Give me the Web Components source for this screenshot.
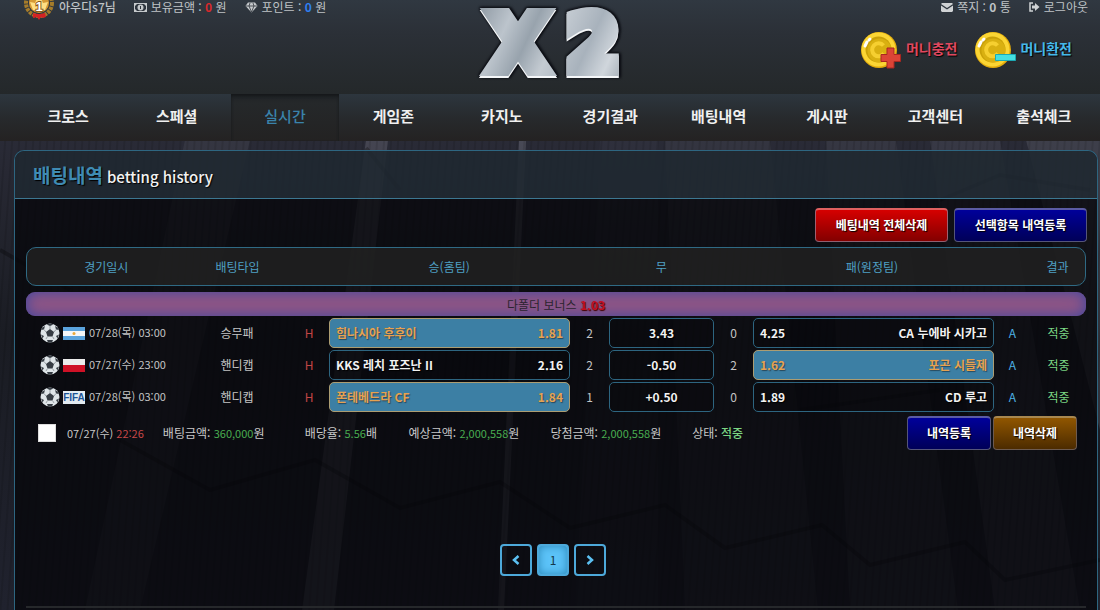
<!DOCTYPE html>
<html lang="ko">
<head>
<meta charset="utf-8">
<title>배팅내역</title>
<style>
  html, body { margin: 0; }
  body {
    background: #0b0c10;
    color: #ccc;
    font: 12px/16px "Noto Sans CJK KR", sans-serif;
  }
</style>
</head>
<body>
<bet-page>
  <top-bar slot="top"></top-bar>
  <main-nav slot="nav" items="크로스,스페셜,실시간,게임존,카지노,경기결과,배팅내역,게시판,고객센터,출석체크" current="실시간"></main-nav>
  <history-panel>
    <span slot="title">배팅내역</span>
    <span slot="subtitle">betting history</span>
    <glossy-button slot="actions" tone="red" size="wide">베팅내역 전체삭제</glossy-button>
    <glossy-button slot="actions" tone="blue" size="wide">선택항목 내역등록</glossy-button>
    <bet-table></bet-table>
    <bet-summary></bet-summary>
    <page-switch></page-switch>
  </history-panel>
</bet-page>

<script>
const define = (name, html, setup) => {
  const template = document.createElement('template');
  template.innerHTML = '<style>*{box-sizing:border-box}</style>' + html;
  customElements.define(name, class extends HTMLElement {
    constructor() {
      super();
      this.attachShadow({ mode: 'open' }).append(template.content.cloneNode(true));
    }
    connectedCallback() {
      if (setup && !this.ready) { this.ready = true; setup(this, this.shadowRoot); }
    }
  });
};

/* Page frame with the night-facade backdrop */
define('bet-page', `
  <style>
    :host { display: block; position: relative; min-height: 100vh; overflow: hidden; background: #0b0c10; }
    .backdrop { position: absolute; inset: 0; width: 100%; height: 100%; }
    .front { position: relative; min-height: 100vh; display: flex; flex-direction: column; }
    main { flex: 1; display: flex; padding: 9px 2px 0 14px; }
    ::slotted(history-panel) { flex: 1; }
  </style>
  <svg class="backdrop" viewBox="0 0 1100 610" preserveAspectRatio="none" aria-hidden="true">
    <defs>
      <linearGradient id="sky" x1="0" y1="0" x2="0" y2="1">
        <stop offset=".2" stop-color="#2b2c38"/><stop offset=".55" stop-color="#1a1c23"/><stop offset="1" stop-color="#20222e"/>
      </linearGradient>
      <pattern id="rib" width="7" height="10" patternUnits="userSpaceOnUse" patternTransform="rotate(4)">
        <path d="M1 0V10" stroke="#000" stroke-opacity=".1" stroke-width="2"/>
      </pattern>
    </defs>
    <path fill="url(#sky)" d="M0 0H1100V610H0z"/>
    <g fill="#9a9aa8">
      <path opacity=".1" d="M185 140H250L140 610H85z"/>
      <path opacity=".24" d="M366 140H388L334 610H302z"/>
      <path opacity=".28" d="M519 140H526L504 610H498z"/>
      <path opacity=".05" d="M600 140H658V610H575z"/>
      <path opacity=".09" d="M665 140H770L818 610H685z"/>
      <path opacity=".11" d="M826 140H896L958 610H850z"/>
      <path opacity=".13" d="M930 140H1000L1080 610H995z"/>
      <path opacity=".18" d="M1026 140H1100V430z"/>
    </g>
    <path fill="url(#rib)" d="M0 140H1100V610H0z"/>
    <g fill="none" stroke="#000" stroke-width="4" stroke-opacity=".28">
      <path d="M0 250L70 290M120 440L210 490L315 460L400 508L500 482L570 528L665 505L725 548L822 525L870 565L965 542L1005 580L1100 560"/>
      <path d="M366 148L400 190M940 200L1000 175L1090 190M800 410L940 390"/>
    </g>
  </svg>
  <div class="front">
    <slot name="top"></slot>
    <slot name="nav"></slot>
    <main><slot></slot></main>
  </div>
`);

/* Gold coin with a plus or minus mark */
define('coin-link', `
  <style>
    :host { display: block; }
    a { display: flex; align-items: center; gap: 4px; font: 700 14px/20px "Noto Sans CJK KR", sans-serif; text-decoration: none; color: #e0485f; text-shadow: 1px 1px 1px #000; }
    :host([kind="minus"]) a { color: #45b8ea; }
    :host([kind="minus"]) .plus, :host([kind="plus"]) .minus { display: none; }
    svg { display: block; }
    span { padding-bottom: 4px; }
  </style>
  <a href="#">
    <svg width="42" height="38" viewBox="0 0 42 38" aria-hidden="true">
      <circle cx="19" cy="19" r="18" fill="#e3ac0c"/>
      <circle cx="18.500" cy="18.500" r="17" fill="#fbd534"/>
      <circle cx="18.500" cy="18.500" r="13" fill="#c9a008"/>
      <circle cx="19.500" cy="19.500" r="12" fill="#d9b011"/>
      <path d="M23.500 14.500A6.500 6.500 0 1 0 24 22.500" fill="none" stroke="#f6cf30" stroke-width="4"/>
      <path d="M5 15l2-4M9 9l1-1" fill="none" stroke="#fff" stroke-width="3" stroke-linecap="round"/>
      <path class="plus" d="M27 17h7v6.500h6.500v7H34V37h-7v-6.500h-6v-7h6z" fill="#dc4436" stroke="#a92620"/>
      <path class="minus" d="M21.500 23.500h20v6h-20z" fill="#45dfe0" stroke="#1ba9b4"/>
    </svg>
    <span><slot></slot></span>
  </a>
`);

define('top-bar', `
  <style>
    :host { display: block; height: 94px; background: linear-gradient(#303841, #2b3037 35%, #24282a); }
    .grid { display: grid; grid-template-columns: 1fr auto 1fr; padding: 0 12px 0 22px; }
    .user, .tools { display: flex; height: 14px; align-items: center; line-height: 14px; color: #bfc3c6; }
    .user { gap: 18px; }
    .user > span, .tools > a { display: flex; align-items: center; gap: 4px; color: inherit; text-decoration: none; white-space: pre; }
    .user > span.name { gap: 3px; font-weight: 500; }
    svg { display: block; flex: none; }
    b.red { color: #d8292c; } b.blue { color: #2f7ff0; }
    .medal { margin: -14px 0 -6px; }
    .logo text { stroke: url(#steel); fill: url(#steel); filter: drop-shadow(0 2px 0 #f4f6f8) drop-shadow(2px 0 1px #0c0e14) drop-shadow(-1px -1px 1px #0c0e14); }
    .tools { justify-content: flex-end; gap: 18px; }
    .coins { display: flex; justify-content: flex-end; gap: 17px; padding: 17px 16px 0 0; }
  </style>
  <header class="grid">
    <div class="user">
      <span class="name">
        <svg class="medal" width="34" height="34" viewBox="0 0 34 34" aria-hidden="true">
          <circle cx="17" cy="17" r="13" fill="none" stroke="#a67c2a" stroke-width="4" stroke-dasharray="3 1"/>
          <circle cx="17" cy="17" r="10" fill="#d69a36"/>
          <path d="M8 16l5 1 4-9 4 9 5-1-3 8H11z" fill="#ffdf83"/>
          <path d="M11 27q6 2 12 0l1 4-3 1-2-1-2 3-2-3-4 1z" fill="#d42224"/>
          <text x="17" y="25" text-anchor="middle" font-family="Liberation Sans" font-weight="700" font-size="13" fill="#fff" stroke="#8b5a1a" stroke-width="2" paint-order="stroke">1</text>
        </svg><span>아우디s7님</span></span>
      <span><svg width="13" height="9" viewBox="0 0 13 9" aria-hidden="true"><path fill="#c5c9cc" fill-rule="evenodd" d="M0 0h13v9H0zM3 1L1 3v3l2 2h7l2-2V3l-2-2z"/><circle cx="6.500" cy="4.500" r="3" fill="#c5c9cc"/><path d="M6 3h1v3H6z" fill="#2e343b"/></svg><span>보유금액 : <b class="red">0</b> 원</span></span>
      <span><svg width="13" height="11" viewBox="0 0 13 11" aria-hidden="true"><path d="M3 .500h7l2.500 3.500-6 6.500L.500 4z" fill="#c5c9cc"/><path d="M1 4h11M4 4l2.500 6L9 4M4 4l1-3M9 4L8 1" stroke="#2e343b" fill="none" stroke-width=".8"/></svg><span>포인트 : <b class="blue">0</b> 원</span></span>
    </div>
    <svg class="logo" width="176" height="88" viewBox="0 0 176 88" role="img" aria-label="X2">
      <defs>
        <linearGradient id="steel" gradientUnits="userSpaceOnUse" x1="10" y1="10" x2="160" y2="80">
          <stop offset="0" stop-color="#8e99a3"/><stop offset=".2" stop-color="#bcc4cc"/><stop offset=".35" stop-color="#98a3ad"/><stop offset=".5" stop-color="#c4cbd2"/><stop offset=".7" stop-color="#a8b2bc"/><stop offset=".85" stop-color="#d0d6dc"/><stop offset="1" stop-color="#9aa4ad"/>
        </linearGradient>
      </defs>
      <g font-family="DejaVu Sans" font-weight="700" font-size="76" text-anchor="middle" stroke-width="12">
        <text x="51" y="70">X</text><text x="126" y="70">2</text>
      </g>
    </svg>
    <div>
      <div class="tools">
        <a href="#"><svg width="12" height="9" viewBox="0 0 12 9" aria-hidden="true"><path d="M1 0h10l1 1-6 4-6-4zM0 2.500l6 4 6-4V8l-1 1H1L0 8z" fill="#d0d3d5"/></svg><span>쪽지 : <b>0</b> 통</span></a>
        <a href="#"><svg width="11" height="10" viewBox="0 0 11 10" aria-hidden="true"><path d="M4 1H1v8h3" fill="none" stroke="#d0d3d5" stroke-width="1.500"/><path d="M3 3.500h3V1l4.500 4L6 9V6.500H3z" fill="#d0d3d5"/></svg><span>로그아웃</span></a>
      </div>
      <div class="coins">
        <coin-link kind="plus">머니충전</coin-link>
        <coin-link kind="minus">머니환전</coin-link>
      </div>
    </div>
  </header>
`);

define('main-nav', `
  <style>
    :host { display: block; background: linear-gradient(#2d363e, #272a2d 50%, #242222); }
    nav { display: grid; grid-auto-flow: column; grid-auto-columns: 1fr; padding: 0 2px 0 14px; }
    a { font: 700 15px/44px "Noto Sans CJK KR", sans-serif; height: 47px; text-align: center; color: #f0f0f0; text-decoration: none; }
    a[aria-current] { color: #3a83ab; font-weight: 500; background: linear-gradient(#1f2225, #25282a 20%, #232222); box-shadow: inset 0 2px 3px #15181a; }
  </style>
  <nav></nav>
`, (host, root) => {
  for (const label of host.getAttribute('items').split(',')) {
    const a = document.createElement('a');
    a.href = '#';
    a.textContent = label;
    if (label === host.getAttribute('current')) a.setAttribute('aria-current', 'page');
    root.querySelector('nav').append(a);
  }
});

define('glossy-button', `
  <style>
    :host { display: block; }
    button { width: 84px; height: 34px; padding: 0 0 1px; border: 1px solid #55557a; border-top: 2px solid #5b5ba4; border-radius: 4px; background: linear-gradient(#00009a, #000058); color: #fff; font: 700 12px/16px "Noto Sans CJK KR", sans-serif; text-shadow: 1px 1px 1px #000; }
    :host([size="wide"]) button { width: 133px; }
    :host([tone="red"]) button { background: linear-gradient(#d60000, #830000); border-color: #e06060 #a06070 #906070; }
    :host([tone="brown"]) button { background: linear-gradient(#905600, #4c2b00); border-color: #a88850 #6c5a50 #6c5a50; }
  </style>
  <button type="button"><slot></slot></button>
`);

define('history-panel', `
  <style>
    :host { display: block; border: 1px solid #2e6681; border-bottom: 0; border-radius: 10px 10px 0 0; background: rgba(5,6,9,.74); }
    header { display: flex; align-items: baseline; gap: 4px; height: 48px; padding: 0 18px; border-bottom: 1px solid #3c7791; border-radius: 9px 9px 0 0; background: rgba(48,62,72,.55); text-shadow: 1px 1px 1px #000; }
    h1 { margin: 0; font: 700 19px/47px "Noto Sans CJK KR", sans-serif; color: #3f8bb3; }
    h2 { margin: 0; font: 500 15px/47px "Noto Sans CJK KR", sans-serif; color: #f2f2f2; }
    .actions { display: flex; justify-content: flex-end; gap: 6px; padding: 9px 10px 5px; }
    .body { padding: 0 11px; }
  </style>
  <header><h1><slot name="title"></slot></h1><h2><slot name="subtitle"></slot></h2></header>
  <div class="actions"><slot name="actions"></slot></div>
  <div class="body"><slot></slot></div>
`);

define('odds-box', `
  <style>
    :host { display: flex; justify-content: space-between; align-items: center; height: 30px; padding: 0 6px; border: 1px solid #2d6580; border-radius: 5px; color: #f2f2f2; font-weight: 700; background: rgba(5,6,9,.3); text-shadow: 1px 1px 1px #000; }
    :host([center]) { justify-content: center; }
    :host([picked]) { background: #3c7fa4; border-color: #ac9d72; color: #e6a251; text-shadow: 1px 1px 1px #26485c; }
  </style>
  <slot></slot>
`);

const flags = {
  ar: '<path fill="#5aa3dd" d="M0 0h22v13H0z"/><path fill="#f4f6f8" d="M0 4h22v5H0z"/><circle cx="11" cy="6.500" r="1.500" fill="#e8a93a"/>',
  pl: '<path fill="#ececec" d="M0 0h22v13H0z"/><path fill="#cf1126" d="M0 6h22v7H0z"/>',
  fifa: '<path fill="#e3ebf1" d="M0 0h22v13H0z"/><text x="11" y="10" text-anchor="middle" font-family="Liberation Sans" font-weight="700" font-size="10" fill="#1c5496">FIFA</text>'
};
const ball = `<svg width="20" height="20" viewBox="0 0 20 20" aria-hidden="true"><circle cx="10" cy="10" r="9.500" fill="#dfe5e8"/><g fill="#363c43"><path d="M10 6l4 3-1.500 4.500h-5L6 9zM6.500 1.500L10 3l3.500-1.500L10 .500zM1 7l3-.500L5 3 2.500 4.500zM19 7l-3-.500L15 3l2.500 1.500zM2.500 15.500L4 13 1 11.500zM17.500 15.500L16 13l3-1.500zM7 17h6l-1 2.500H8z"/></g><path d="M10 6V3M14 9l2-2.500M12.500 13.500L14 16M7.500 13.500L6 16M6 9L4 6.500" stroke="#9aa1a6"/></svg>`;

const matches = [
  { flag: 'ar', date: '07/28(목) 03:00', type: '승무패', home: ['힘나시아 후후이', '1.81'], hs: 2, draw: '3.43', as: 0, away: ['4.25', 'CA 누에바 시카고'], pick: 'home' },
  { flag: 'pl', date: '07/27(수) 23:00', type: '핸디캡', home: ['KKS 레치 포즈난 II', '2.16'], hs: 2, draw: '-0.50', as: 2, away: ['1.62', '포곤 시들제'], pick: 'away' },
  { flag: 'fifa', date: '07/28(목) 03:00', type: '핸디캡', home: ['폰테베드라 CF', '1.84'], hs: 1, draw: '+0.50', as: 0, away: ['1.89', 'CD 루고'], pick: 'home' }
];

define('bet-table', `
  <style>
    :host { display: block; }
    table, thead, tbody { display: block; }
    tr { display: grid; grid-template-columns: 159fr 104fr 40fr 241fr 39fr 105fr 39fr 241fr 37fr 55fr; align-items: center; text-align: center; }
    th, td { padding: 0; min-width: 0; white-space: nowrap; }
    thead tr { height: 39px; border: 1px solid #2f6a84; border-radius: 10px; background: rgba(33,33,33,.85); }
    thead th { font-weight: 400; color: #4fa0c4; }
    .three { grid-column: span 3; }
    .bonus { display: block; height: 24px; margin: 6px 0 1px; border-radius: 9px; background: #8e5585; box-shadow: inset 0 0 14px #3d47a0; line-height: 25px; color: #2b2430; }
    .bonus td { display: block; }
    .bonus b { color: #c30f22; text-shadow: 1px 1px 1px #400; }
    .match { height: 32px; color: #c4c4c4; }
    .when { display: flex; align-items: center; gap: 3px; padding-left: 14px; font-size: 11px; }
    .when svg { flex: none; }
    .when span { padding: 0 0 3px 1px; }
    .h { color: #c34545; } .a { color: #4db1e4; } .win { color: #7bd583; }
  </style>
  <table>
    <thead><tr>
      <th scope="col">경기일시</th><th scope="col">배팅타입</th>
      <th scope="col" class="three" colspan="3">승(홈팀)</th><th scope="col">무</th>
      <th scope="col" class="three" colspan="3">패(원정팀)</th><th scope="col">결과</th>
    </tr></thead>
    <tbody><tr class="bonus"><td colspan="10">다폴더 보너스 <b>1.03</b></td></tr></tbody>
  </table>
`, (host, root) => {
  root.querySelector('tbody').insertAdjacentHTML('beforeend', matches.map(m => `
    <tr class="match">
      <td class="when">${ball}<svg width="22" height="13" viewBox="0 0 22 13" aria-hidden="true">${flags[m.flag]}</svg><span>${m.date}</span></td>
      <td>${m.type}</td>
      <td class="h">H</td>
      <td><odds-box ${m.pick === 'home' ? 'picked' : ''}><span>${m.home[0]}</span><span>${m.home[1]}</span></odds-box></td>
      <td>${m.hs}</td>
      <td><odds-box center><span>${m.draw}</span></odds-box></td>
      <td>${m.as}</td>
      <td><odds-box ${m.pick === 'away' ? 'picked' : ''}><span>${m.away[0]}</span><span>${m.away[1]}</span></odds-box></td>
      <td class="a">A</td>
      <td class="win">적중</td>
    </tr>`).join(''));
});

define('bet-summary', `
  <style>
    :host { display: grid; grid-template-columns: 41fr 96fr 142fr 104fr 142fr 142fr 215fr auto; align-items: center; padding: 3px 9px 0 0; color: #c8c8c8; white-space: nowrap; }
    input { appearance: none; display: block; width: 18px; height: 18px; margin: 0 0 0 12px; background: #fff; border: 1px solid #ddd; }
    label, .green { font-size: 11px; }
    .green { color: #49ad50; } .red { color: #c94848; } .win { color: #7bd583; font-weight: 500; }
    .buttons { display: flex; gap: 2px; }
  </style>
  <input type="checkbox" id="pick" aria-label="선택">
  <label for="pick">07/27(수) <span class="red">22:26</span></label>
  <span>배팅금액: <span class="green">360,000</span>원</span>
  <span>배당율: <span class="green">5.56</span>배</span>
  <span>예상금액: <span class="green">2,000,558</span>원</span>
  <span>당첨금액: <span class="green">2,000,558</span>원</span>
  <span>상태: <span class="win">적중</span></span>
  <div class="buttons"><glossy-button>내역등록</glossy-button><glossy-button tone="brown">내역삭제</glossy-button></div>
`);

define('page-switch', `
  <style>
    :host { display: block; padding-top: 94px; }
    nav { display: flex; justify-content: center; gap: 5px; padding: 0 6px 30px 0; border-bottom: 2px solid #26282b; }
    a { display: grid; place-items: center; width: 32px; height: 32px; border: 2px solid #4da9da; border-radius: 4px; color: #14384c; text-decoration: none; }
    a[aria-current] { background: #5cc3f8; box-shadow: inset 0 0 8px #2b87b8; }
  </style>
  <nav aria-label="페이지">
    <a href="#" aria-label="이전"><svg width="8" height="10" viewBox="0 0 8 10"><path d="M6.500 1L2 5l4.500 4" fill="none" stroke="#5cc0f2" stroke-width="2.500"/></svg></a>
    <a href="#" aria-current="page">1</a>
    <a href="#" aria-label="다음"><svg width="8" height="10" viewBox="0 0 8 10"><path d="M1.500 1L6 5 1.500 9" fill="none" stroke="#5cc0f2" stroke-width="2.500"/></svg></a>
  </nav>
`);
</script>
</body>
</html>
